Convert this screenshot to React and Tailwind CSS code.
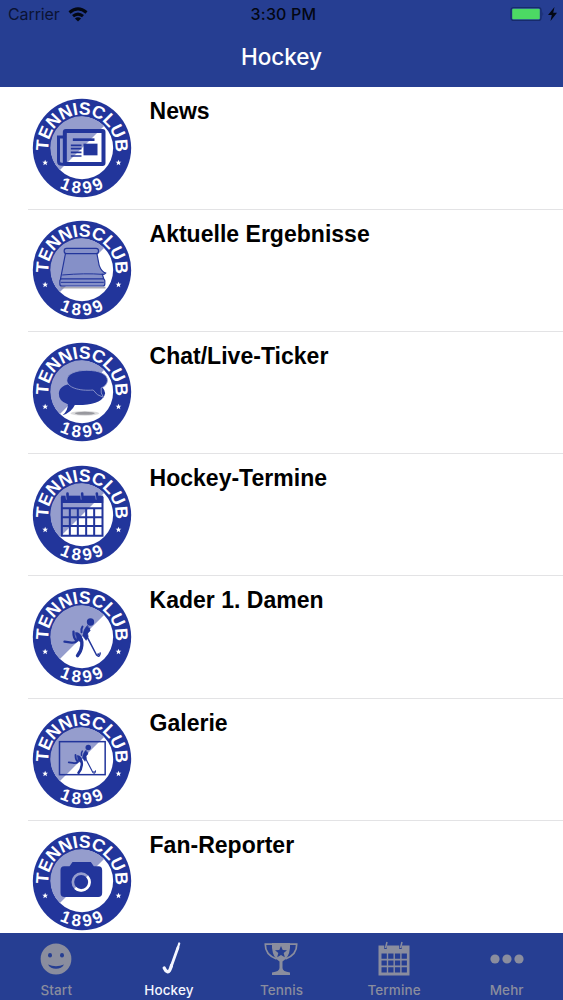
import { useId } from "react";

const items = [
  { title: "News", icon: NewsIcon },
  { title: "Aktuelle Ergebnisse", icon: ScrollIcon },
  { title: "Chat/Live-Ticker", icon: ChatIcon },
  { title: "Hockey-Termine", icon: CalendarIcon },
  { title: "Kader 1. Damen", icon: PlayerIcon },
  { title: "Galerie", icon: GalleryIcon },
  { title: "Fan-Reporter", icon: CameraIcon },
];

const tabs = [
  { label: "Start", icon: SmileTab },
  { label: "Hockey", icon: StickTab, active: true },
  { label: "Tennis", icon: TrophyTab },
  { label: "Termine", icon: CalendarTab },
  { label: "Mehr", icon: DotsTab },
];

const BLUE = "#22359b";
const LIGHT = "#959dcd";

function NewsIcon() {
  return (
    <g fill="none" stroke={BLUE}>
      <path d="M133 141H115V214Q115 223 126 223H240" strokeWidth="9" />
      <rect x="134" y="123" width="116" height="99" rx="3" strokeWidth="12" />
      <path d="M158 149H223" strokeWidth="8" />
      <path d="M152 166H184M152 176H184M152 187H184M152 198H184" strokeWidth="5" />
      <rect x="190" y="161" width="42" height="35" fill={BLUE} stroke="none" />
    </g>
  );
}

function ScrollIcon() {
  return (
    <g stroke={BLUE} strokeWidth="3.5" strokeLinejoin="round">
      <path d="M122 227H256" stroke="#8a8a96" strokeWidth="5" opacity="0.7" />
      <path d="M136 124L121 201H251L246 186Q252 189 257 183Q244 180 237 160L230 124Z" fill="#8590c8" />
      <rect x="132" y="109" width="103" height="16" rx="7" fill="#8590c8" />
      <rect x="119" y="201" width="135" height="21" rx="6" fill="#8590c8" />
      <path d="M126 189Q195 183 246 187M122 211H251" fill="none" strokeWidth="3" />
    </g>
  );
}

function ChatIcon() {
  return (
    <g fill={BLUE}>
      <ellipse cx="194" cy="238" rx="43" ry="7" fill="#55555f" opacity="0.22" />
      <ellipse cx="194" cy="238" rx="30" ry="4.5" fill="#55555f" opacity="0.5" />
      <path d="M116 178Q118 152 157 149H230Q252 156 255 178Q248 210 188 213L164 213Q154 235 127 244Q144 230 143 211Q115 202 116 178Z" />
      <path
        d="M200 109C238 109 262 121 262 140Q260 155 243 162Q240 178 250 190Q229 185 219 168C177 172 140 160 140 139C140 119 168 109 200 109Z"
        stroke={LIGHT}
        strokeWidth="2.5"
      />
    </g>
  );
}

function CalendarIcon() {
  return (
    <g stroke={BLUE} fill="none">
      <rect x="123" y="116" width="126" height="22" fill={BLUE} stroke="none" />
      <path d="M125 120V236H247V120M123 154H249" strokeWidth="6" />
      <path d="M124 181H248M124 207H248M149 154V236M173 154V236M198 154V236M222 154V236" strokeWidth="6" />
      <path d="M142 110V128M186 110V128M230 110V128" strokeWidth="8" strokeLinecap="round" />
      <path d="M136 112L139 128M181 112L183 128M225 112L228 128" stroke={LIGHT} strokeWidth="2" />
    </g>
  );
}

function PlayerIcon() {
  return (
    <g fill={BLUE} stroke={BLUE} strokeLinecap="round" strokeLinejoin="round">
      <circle cx="211" cy="129" r="11" stroke="none" />
      <path d="M201 140Q190 150 188 171L198 184L204 173L202 162L208 150Z" strokeWidth="2" />
      <path d="M187 143Q182 150 184 160M206 150L200 162L208 154" fill="none" strokeWidth="6" />
      <path d="M160 158Q159 178 170 186Q164 193 149 190L133 188" fill="none" strokeWidth="7" />
      <path d="M175 169Q187 180 185 199Q183 217 172 230" fill="none" strokeWidth="10" />
      <path d="M166 161Q180 159 185 178L182 188L171 184Z" strokeWidth="2" />
      <path d="M202 176L229 228Q239 237 240 222" fill="none" strokeWidth="4.5" />
      <circle cx="234" cy="226" r="3" stroke="none" />
    </g>
  );
}

function GalleryIcon() {
  return (
    <g>
      <rect x="118" y="122" width="137" height="99" fill="none" stroke={BLUE} strokeWidth="4.5" />
      <g transform="translate(46 43) scale(.75)">
        <PlayerIcon />
      </g>
    </g>
  );
}

function CameraIcon() {
  return (
    <g fill={BLUE}>
      <path d="M132 130H148L157 117H212L221 130H235Q246 130 246 142V209Q246 222 234 222H133Q121 222 121 209V142Q121 130 132 130Z" />
      <circle cx="183" cy="177" r="25" fill="none" stroke={LIGHT} strokeWidth="8" />
      <path d="M201 160A25 25 0 0 1 165 195" fill="none" stroke="#fff" strokeWidth="8" />
    </g>
  );
}

function Star({ x, y }) {
  return (
    <path
      transform={`translate(${x} ${y})`}
      d="M0-9L2.4-3L8.6-2.8L3.8 1.2L5.4 7.4L0 4L-5.4 7.4L-3.8 1.2L-8.6-2.8L-2.4-3Z"
      fill="#fff"
    />
  );
}

// round club logo, every row puts its own icon in the middle
function Badge({ icon: Icon }) {
  const id = useId();

  return (
    <svg viewBox="35.5 24 300 300" className="h-[100px] w-[100px] shrink-0">
      <defs>
        <path id={id + "top"} d="M84.500 183A101 101 0 1 1 285 190" />
        <path id={id + "bottom"} d="M49.500 174A136 136 0 0 0 321.500 174" />
      </defs>
      <circle cx="185.5" cy="174" r="147.5" fill={BLUE} />
      <circle cx="185.5" cy="174" r="93.5" fill="#fff" />
      <path d="M119.4 240.1A93.5 93.5 0 1 1 251.6 107.9Z" fill={LIGHT} />
      <g fill="#fff" className="font-['Liberation_Sans',Arial,sans-serif] font-bold">
        <text fontSize="53">
          <textPath href={"#" + id + "top"} textLength="337">TENNISCLUB</textPath>
        </text>
        <text fontSize="51" letterSpacing="9" textAnchor="middle">
          <textPath href={"#" + id + "bottom"} startOffset="51%">1899</textPath>
        </text>
      </g>
      <Star x={75} y={218} />
      <Star x={295} y={218} />
      <Icon />
    </svg>
  );
}

function SmileTab() {
  return (
    <svg viewBox="0 0 36 36" className="h-9 w-9">
      <circle cx="18" cy="18" r="15.4" fill="currentColor" />
      <g fill="#263e92">
        <ellipse cx="12" cy="14.3" rx="2" ry="2.3" />
        <ellipse cx="24" cy="14.3" rx="2" ry="2.3" />
        <path d="M10 23.5Q18 27 26 23.5Q23.5 27.8 18 27.8Q12.5 27.8 10 23.5Z" />
      </g>
    </svg>
  );
}

function StickTab() {
  return (
    <svg viewBox="0 0 36 36" className="h-9 w-9" fill="none" stroke="currentColor" strokeLinecap="round">
      <path d="M28.2 2.5L26.5 8" strokeWidth="2.2" />
      <path d="M27 6.5L20.2 25.5" strokeWidth="2.8" />
      <path d="M20.5 24.5Q18.5 31.5 16.5 30.8Q14.5 30 13.2 27" strokeWidth="3.2" />
    </svg>
  );
}

function TrophyTab() {
  return (
    <svg viewBox="0 0 36 36" className="h-9 w-9">
      <path
        d="M10 3.2H2.3Q2 13.5 13.5 18M26 3.2H33.7Q34 13.5 22.5 18"
        fill="none"
        stroke="currentColor"
        strokeWidth="1.7"
      />
      <path d="M9 2H27V7Q26 17 19.5 20.5V27Q19.5 30.5 27 31.5V34H9V31.5Q16.5 30.5 16.5 27V20.5Q10 17 9 7Z" fill="currentColor" />
      <path d="M18 5L19.7 9L24 9.3L20.7 12.1L21.8 16.3L18 14L14.2 16.3L15.3 12.1L12 9.3L16.3 9Z" fill="#263e92" />
    </svg>
  );
}

function CalendarTab() {
  return (
    <svg viewBox="0 0 36 36" className="h-9 w-9">
      <path d="M2.5 4.5H33.5V34.5H2.5Z" fill="currentColor" />
      <g fill="none" stroke="#263e92">
        <path d="M5.5 15.2H31M5.5 22H31M5.5 28.8H31" strokeWidth="5.2" strokeDasharray="5.3 1.4" />
        <path d="M9.5 2V8M24.5 2V8" strokeWidth="2.5" />
      </g>
      <path d="M11 1L9.5 7M26 1L24.5 7" stroke="currentColor" strokeWidth="1.5" />
    </svg>
  );
}

function DotsTab() {
  return (
    <svg viewBox="0 0 36 36" className="h-9 w-9" fill="currentColor">
      <circle cx="6" cy="18" r="4.6" />
      <circle cx="18" cy="18" r="4.6" />
      <circle cx="30" cy="18" r="4.6" />
    </svg>
  );
}

function StatusBar() {
  return (
    <div className="grid h-7 grid-cols-3 items-center pl-2 pr-[6px] text-[16px] text-[#0b1334]">
      <div className="flex items-center gap-2">
        <span className="tracking-[-0.1px]">Carrier</span>
        <svg viewBox="0 0 20 15" className="h-[15px] w-5" fill="none" stroke="#030713" strokeWidth="3">
          <path d="M1.5 5.5Q10-1.8 18.5 5.5" />
          <path d="M5 9.2Q10 5 15 9.2" />
          <path d="M10 14.5L6.9 11.5Q10 9 13.1 11.5Z" fill="#030713" stroke="none" />
        </svg>
      </div>
      <div className="pl-0.5 text-center font-medium tracking-[0.2px] text-[#030713]">3:30 PM</div>
      <div className="flex items-center justify-end gap-1">
        <svg viewBox="0 0 34 16" className="h-4 w-[34px]">
          <rect x="1" y="1.5" width="30" height="13" rx="2.5" fill="none" stroke="#172b6a" strokeWidth="1.2" />
          <rect x="2.2" y="2.7" width="27.6" height="10.6" rx="1" fill="#4cd964" />
          <path d="M32.5 5.5Q34 8 32.5 10.5Z" fill="#172b6a" />
        </svg>
        <svg viewBox="0 0 9 14" className="h-3.5 w-[9px]" fill="#030713">
          <path d="M6.5 0L0 8H3.8L2.5 14L9 5.8H5.2Z" />
        </svg>
      </div>
    </div>
  );
}

function App() {
  return (
    <div className="flex h-[1000px] w-[563px] flex-col overflow-hidden bg-white font-[Inter,Roboto,sans-serif]">
      <header className="h-[86.7px] shrink-0 bg-[#263e92]">
        <StatusBar />
        <h1 className="mt-3 text-center text-[22.5px] font-medium leading-[34px] text-white">Hockey</h1>
      </header>

      <main className="min-h-0 flex-1 overflow-hidden pt-[0.8px]">
        {items.map((item) => (
          <div key={item.title} className="flex h-[122.25px] pl-7">
            <div className="flex flex-1 border-b border-[#e3e3e5] pl-[3.5px] pt-[10.5px]">
              <Badge icon={item.icon} />
              <h2 className="ml-[18px] mt-[0.5px] font-['Liberation_Sans',Arial,sans-serif] text-[23px] font-bold leading-[27px] tracking-[0.02px] text-black">
                {item.title}
              </h2>
            </div>
          </div>
        ))}
      </main>

      <nav className="grid h-[66.7px] shrink-0 grid-cols-5 bg-[#263e92]">
        {tabs.map(({ label, icon: Icon, active }) => (
          <div
            key={label}
            className={`flex flex-col items-center pt-2 ${active ? "text-[#f4f6ff]" : "text-[#8a8d9e]"}`}
          >
            <Icon />
            <span className="mt-1 text-[13.5px] font-medium leading-[18px] tracking-[0.1px]">{label}</span>
          </div>
        ))}
      </nav>
    </div>
  );
}

export default App;
